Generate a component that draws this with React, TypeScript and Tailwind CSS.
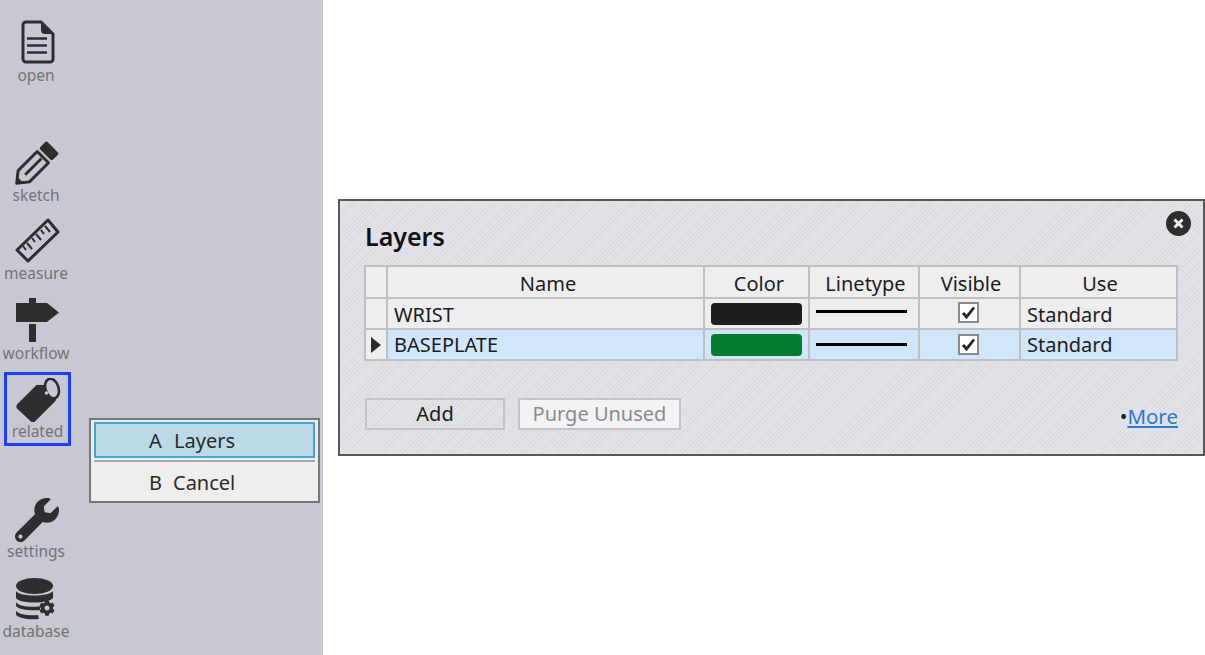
import { FaCog, FaWrench } from "react-icons/fa";
import type { ReactNode } from "react";

const ink = "#2e2e30";

function DocIcon() {
  return (
    <svg width="72" height="46" viewBox="0 0 72 46">
      <path d="M26 2h15l12 12v25a3 3 0 0 1-3 3H26a3 3 0 0 1-3-3V5a3 3 0 0 1 3-3z" fill="none" stroke={ink} strokeWidth="3" />
      <path d="M41 1l13 13H45a4 4 0 0 1-4-4z" fill={ink} />
      <path d="M27 18.500h20M27 25.500h20M27 32.500h20" stroke={ink} strokeWidth="2.600" />
    </svg>
  );
}

function PencilIcon() {
  return (
    <svg width="72" height="46" viewBox="0 0 72 46">
      <g transform="translate(16 44) rotate(-45)">
        <path d="M1 0l10-8h27V8H11z" fill="none" stroke={ink} strokeWidth="3" strokeLinejoin="round" />
        <path d="M0 0l6-4.500v9z" fill={ink} />
        <path d="M13 0h23" stroke={ink} strokeWidth="2.800" />
        <rect x="41.500" y="-9" width="10.500" height="18" rx="2" fill={ink} />
      </g>
    </svg>
  );
}

function RulerIcon() {
  return (
    <svg width="72" height="46" viewBox="0 0 72 46">
      <path d="M17 32L48 2l10 12-30 29z" fill="none" stroke={ink} strokeWidth="3" strokeLinejoin="round" />
      <path d="M23 28l3 4M27 25l5 6M32 20l3 4M36 16l5 6M41 12l3 4M45 8l5 6" stroke={ink} strokeWidth="2" />
    </svg>
  );
}

function SignIcon() {
  return (
    <svg width="72" height="46" viewBox="0 0 72 46">
      <rect x="29" y="0" width="7" height="6" fill={ink} />
      <path d="M16 5h31l12 9.500L47 24H16z" fill={ink} />
      <rect x="29" y="26" width="7" height="18" fill={ink} />
    </svg>
  );
}

function TagIcon() {
  return (
    <svg width="72" height="46" viewBox="0 0 72 46">
      <path d="M15 27L35 7h11l9 13-1 3-21 21h-3L15 30z" fill={ink} />
      <ellipse cx="50.500" cy="10.500" rx="6.500" ry="10" transform="rotate(-18 50.500 10.500)" fill="#c8c8d2" stroke={ink} strokeWidth="2.600" />
      <circle cx="45" cy="15" r="1.800" fill="#c8c8d2" />
    </svg>
  );
}

function DbIcon() {
  return (
    <svg width="72" height="46" viewBox="0 0 72 46">
      <ellipse cx="34.500" cy="8" rx="18.500" ry="8" fill={ink} />
      <path d="M16 13c3 6 33 6 37 0v7c-4 6-34 6-37 0z" fill={ink} />
      <path d="M16 24c3 6 27 6 31 2l-7 4v2c-8 1-21 0-24-4z" fill={ink} />
      <path d="M16 33c4 4 14 5 22 4l1 4c-10 1-23-1-23-5z" fill={ink} />
      <FaCog x="39" y="22" width="20" height="20" color={ink} />
    </svg>
  );
}

function SideItem({ icon, label, iconBox, className = "" }: { icon: ReactNode; label: string; iconBox: string; className?: string }) {
  return (
    <div className={`flex h-[66px] w-[72px] flex-col items-center ${className}`}>
      <div className={`w-[72px] shrink-0 ${iconBox}`}>{icon}</div>
      <span className="text-[15.500px] leading-[20px] text-[#737378]">{label}</span>
    </div>
  );
}

const rows = [
  { name: "WRIST", color: "bg-[#1e1e1e]", bg: "bg-[#eeeeee]", current: false, lift: "mb-[4px]", boxLift: "mb-[2px]", textPad: "pt-[2px]" },
  { name: "BASEPLATE", color: "bg-[#047c2e]", bg: "bg-[#d0e6fb]", current: true, lift: "mb-[1px]", boxLift: "mb-0", textPad: "pt-[1px]" },
];

function CheckBox({ className }: { className: string }) {
  return (
    <span className={`mx-auto flex h-[21px] w-[21px] items-center justify-center border-2 border-[#8a8a8a] bg-white ${className}`}>
      <svg width="15" height="13" viewBox="0 0 15 13">
        <path d="M2 7l3.500 4L13 1.500" fill="none" stroke="#222" strokeWidth="2.800" />
      </svg>
    </span>
  );
}

function LayersTable() {
  const th = "border-2 border-[#bfbfc4] pb-0 pl-[5px] pr-0 pt-[3px] text-center font-normal";
  const td = "border-2 border-[#bfbfc4] p-0";
  return (
    <table className="w-[814px] table-fixed border-collapse text-[20px] leading-[26px] text-[#1c1c1c]">
      <colgroup>
        <col className="w-[22px]" />
        <col className="w-[317px]" />
        <col className="w-[105px]" />
        <col className="w-[110px]" />
        <col className="w-[101px]" />
        <col />
      </colgroup>
      <thead>
        <tr className="h-[32px] bg-[#eeeeee]">
          <th className={th}></th>
          <th className={th}>Name</th>
          <th className={th}>Color</th>
          <th className="border-2 border-[#bfbfc4] pb-0 pl-[3px] pr-0 pt-[3px] text-center font-normal">Linetype</th>
          <th className="border-2 border-[#bfbfc4] pb-0 pl-[3px] pr-0 pt-[3px] text-center font-normal">Visible</th>
          <th className="border-2 border-[#bfbfc4] pb-0 pl-[3px] pr-0 pt-[3px] text-center font-normal">Use</th>
        </tr>
      </thead>
      <tbody>
        {rows.map((r) => (
          <tr key={r.name} className={`h-[31px] ${r.bg}`}>
            <td className={`${td} bg-[#eeeeee]`}>
              {r.current && (
                <svg className="mx-auto" width="10" height="16" viewBox="0 0 10 16">
                  <path d="M0 0l10 8-10 8z" fill="#2b2b2b" />
                </svg>
              )}
            </td>
            <td className={`${td} pl-[6px] ${r.textPad}`}>{r.name}</td>
            <td className={`${td} px-[6px]`}>
              <div className={`h-[22px] rounded-[4px] ${r.color}`} />
            </td>
            <td className={`${td} pl-[6px] pr-[11px]`}>
              <div className={`h-[3px] bg-black ${r.lift}`} />
            </td>
            <td className={`${td} pr-[2px]`}>
              <CheckBox className={r.boxLift} />
            </td>
            <td className={`${td} pl-[6px] ${r.textPad}`}>Standard</td>
          </tr>
        ))}
      </tbody>
    </table>
  );
}

export default function App() {
  return (
    <div className="relative flex h-[655px] w-[1205px] overflow-hidden bg-white font-['Noto_Sans',sans-serif]">
      <aside className="flex w-[323px] shrink-0 flex-col items-start bg-[#c8c8d2] pt-[20px]">
        <SideItem icon={<DocIcon />} label="open" iconBox="h-[45px]" />
        <SideItem icon={<PencilIcon />} label="sketch" iconBox="h-[45px]" className="mt-[54px]" />
        <SideItem icon={<RulerIcon />} label="measure" iconBox="h-[45px]" className="mt-[12px]" />
        <SideItem icon={<SignIcon />} label="workflow" iconBox="h-[45px]" className="mt-[14px]" />
        <div className="ml-[4px] mt-[8px] flex h-[74px] w-[67px] flex-col items-center border-[3px] border-[#1d3dff] pt-[3px]">
          <div className="h-[43px] w-[72px] shrink-0 -translate-x-[0.500px]">
            <TagIcon />
          </div>
          <span className="text-[15.500px] leading-[20px] text-[#737378]">related</span>
        </div>
        <div className="mt-[52px] flex h-[66px] w-[72px] flex-col items-center">
          <div className="flex h-[43px] w-[72px] shrink-0 justify-center pl-[2px]">
            <FaWrench size={44} color={ink} className="shrink-0" />
          </div>
          <span className="text-[15.500px] leading-[20px] text-[#737378]">settings</span>
        </div>
        <SideItem icon={<DbIcon />} label="database" iconBox="h-[43px]" className="mt-[14px]" />
      </aside>

      <main className="flex-1 pl-[15px] pt-[199px]">
        <section className="relative h-[257px] w-[867px] border-2 border-[#58585c] bg-[#e0e0e8] bg-[repeating-linear-gradient(135deg,#d9d9e1_0px,#d9d9e1_1px,#e3e3ea_1px,#e3e3ea_3px)] pl-[24px] pt-[18px]">
          <button className="absolute right-[12px] top-[10px] flex h-[25px] w-[25px] items-center justify-center rounded-full bg-[#2d2d2f]">
            <svg width="11" height="11" viewBox="0 0 11 11">
              <path d="M1.500 1.500l8 8M9.500 1.500l-8 8" stroke="#f1f1f1" strokeWidth="3" />
            </svg>
          </button>
          <h1 className="pl-[1px] text-[25px] font-semibold leading-[34px] text-[#111111]">Layers</h1>
          <div className="mt-[12px]">
            <LayersTable />
          </div>
          <div className="mt-[37px] flex items-center pl-[1px] pr-[25px]">
            <button className="h-[32px] w-[140px] border-2 border-[#c4c4c8] text-[20px] leading-[26px] text-[#1c1c1c]">Add</button>
            <button className="ml-[13px] h-[32px] w-[163px] border-2 border-[#c4c4c8] bg-[#f3f3f5] text-[20px] leading-[26px] text-[#8b8b92]">
              Purge Unused
            </button>
            <span className="ml-auto mt-[3px] text-[20.500px] leading-[26px] text-[#1c1c1c]">
              •<a className="text-[#2a78d8] underline">More</a>
            </span>
          </div>
        </section>
      </main>

      <div className="absolute left-[89px] top-[418px] h-[85px] w-[231px] border-2 border-[#77777b] bg-[#eeeeee] px-[3px] pt-[2px] text-[20px] leading-[26px] text-[#2a2a2a]">
        <div className="flex h-[36px] items-center border-2 border-[#3ba9de] bg-[#bcd9e8] pl-[53px] pt-[2px]">
          <span className="w-[25px]">A</span>
          <span>Layers</span>
        </div>
        <div className="mt-[2px] h-[2px] bg-[#a9a9ad]" />
        <div className="flex h-[39px] items-center pl-[55px] pt-[3px]">
          <span className="w-[24px]">B</span>
          <span>Cancel</span>
        </div>
      </div>
    </div>
  );
}
